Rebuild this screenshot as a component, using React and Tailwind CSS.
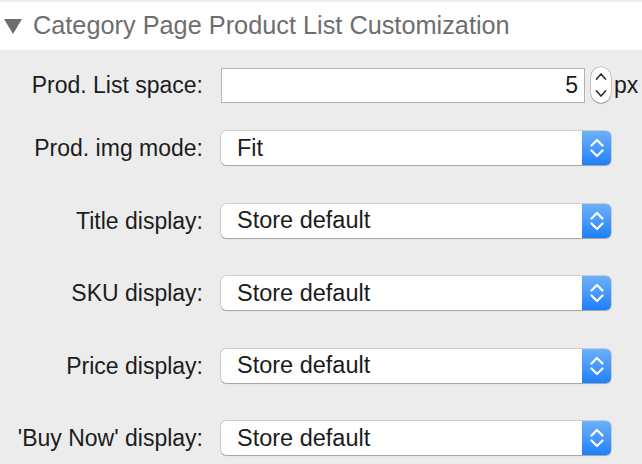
import React from "react";

const font = { fontFamily: '"Liberation Sans", Arial, sans-serif' };

function BlueChevrons() {
  return (
    <svg width="14" height="20" viewBox="0 0 14 20" fill="none" stroke="white" strokeWidth="2.2" strokeLinecap="round" strokeLinejoin="round">
      <path d="M1.5 7.5 L7 2 L12.5 7.5" />
      <path d="M1.5 12.5 L7 18 L12.5 12.5" />
    </svg>
  );
}

function StepChevrons() {
  return (
    <svg width="12" height="28" viewBox="0 0 12 28" fill="none" stroke="#333" strokeWidth="1.7" strokeLinecap="round" strokeLinejoin="round">
      <path d="M1.5 8 L6 3 L10.5 8" />
      <path d="M1.5 20 L6 25 L10.5 20" />
    </svg>
  );
}

function Select({ value }) {
  return (
    <div className="flex h-[34px] w-[390px] rounded-[5px] bg-white shadow-[0_0_0_0.5px_rgba(0,0,0,0.25),0_1px_1px_rgba(0,0,0,0.2)]">
      <div className="flex flex-1 items-center pl-[16px] text-[23.5px] text-[#1c1c1c]">{value}</div>
      <div className="flex w-[29px] items-center justify-center rounded-r-[5px] bg-gradient-to-b from-[#6cb1f9] to-[#1b7ffa]">
        <BlueChevrons />
      </div>
    </div>
  );
}

function Label({ children }) {
  return <div className="w-[205px] pr-[2px] text-right text-[23px] text-[#1c1c1c]">{children}</div>;
}

export default function App() {
  const rows = ["Title display:", "SKU display:", "Price display:", "'Buy Now' display:"];
  return (
    <div className="h-[464px] w-[642px] overflow-hidden bg-[#ececec] pt-[2px]" style={font}>
      <div className="flex h-[48px] items-center bg-white">
        <svg className="ml-[4px]" width="18" height="15" viewBox="0 0 18 15">
          <path d="M0 0 H18 L9 15 Z" fill="#6e6e6e" />
        </svg>
        <span className="ml-[11px] text-[25.3px] text-[#6e6e6e]">Category Page Product List Customization</span>
      </div>
      <div className="mt-[17px] flex items-center">
        <Label>Prod. List space:</Label>
        <div className="ml-[16px] flex h-[35px] w-[364px] items-center justify-end border border-[#b3b3b3] bg-white pr-[6px] text-[23px] text-[#1c1c1c]">5</div>
        <div className="ml-[6px] flex h-[36px] w-[20px] items-center justify-center rounded-full bg-white shadow-[0_0_0_0.5px_rgba(0,0,0,0.3),0_1px_1px_rgba(0,0,0,0.2)]">
          <StepChevrons />
        </div>
        <span className="ml-[3px] text-[23px] text-[#1c1c1c]">px</span>
      </div>
      <div className="mt-[28px] flex items-center">
        <Label>Prod. img mode:</Label>
        <div className="ml-[16px]"><Select value="Fit" /></div>
      </div>
      {rows.map((r) => (
        <div key={r} className="mt-[38px] flex items-center">
          <Label>{r}</Label>
          <div className="ml-[16px]"><Select value="Store default" /></div>
        </div>
      ))}
    </div>
  );
}
